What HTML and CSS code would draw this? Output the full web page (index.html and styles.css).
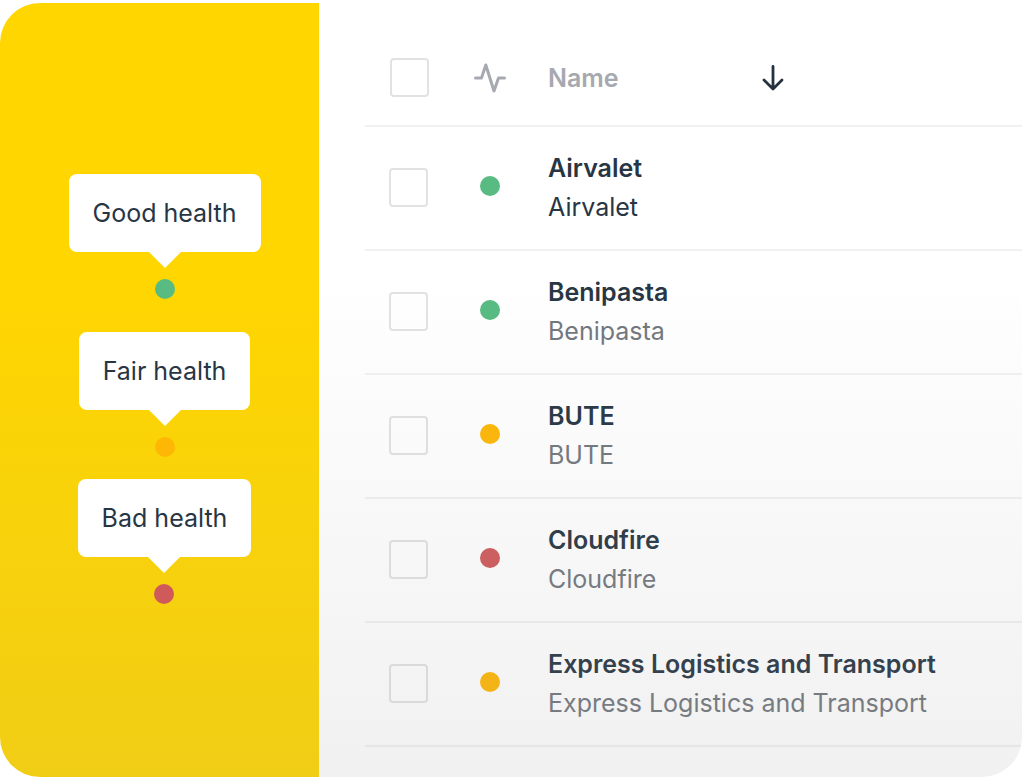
FILE: index.html
```html
<!DOCTYPE html>
<html lang="en">
<head>
    <meta charset="UTF-8">
    <meta name="viewport" content="width=device-width, initial-scale=1.0">
    <title>Customer health</title>
    <link rel="stylesheet" href="styles.css">
</head>
<body>
    <div class="card">
        <aside class="sidebar">
            <div class="legend">
                <div class="bubble">Good health</div>
                <span class="dot good"></span>
            </div>
            <div class="legend legend-fair">
                <div class="bubble">Fair health</div>
                <span class="dot fair"></span>
            </div>
            <div class="legend legend-bad">
                <div class="bubble">Bad health</div>
                <span class="dot bad"></span>
            </div>
        </aside>

        <main class="content">
            <table class="accounts">
                <thead>
                    <tr>
                        <th class="check-col"><input type="checkbox" class="check" aria-label="Select all"></th>
                        <th class="health-col">
                            <svg class="pulse" width="34" height="32" viewBox="0 0 34 32" role="img" aria-label="Health">
                                <path d="M2.5 16H8.5L12.800 3L21 29L25.500 16H31.500" fill="none" stroke="#a6a9af" stroke-width="3" stroke-linecap="round" stroke-linejoin="round"/>
                            </svg>
                        </th>
                        <th class="name-col">
                            <button type="button" class="sort">
                                Name
                                <svg width="24" height="28" viewBox="0 0 24 28" aria-hidden="true">
                                    <path d="M12 2.500V25M3 16L12 25L21 16" fill="none" stroke="#25313f" stroke-width="2.800" stroke-linecap="round" stroke-linejoin="round"/>
                                </svg>
                            </button>
                        </th>
                    </tr>
                </thead>
                <tbody>
                    <tr class="active">
                        <td class="check-col"><input type="checkbox" class="check" aria-label="Select Airvalet"></td>
                        <td class="health-col"><span class="dot good"></span></td>
                        <td class="name-col"><strong>Airvalet</strong><span class="sub">Airvalet</span></td>
                    </tr>
                    <tr>
                        <td class="check-col"><input type="checkbox" class="check" aria-label="Select Benipasta"></td>
                        <td class="health-col"><span class="dot good"></span></td>
                        <td class="name-col"><strong>Benipasta</strong><span class="sub">Benipasta</span></td>
                    </tr>
                    <tr>
                        <td class="check-col"><input type="checkbox" class="check" aria-label="Select BUTE"></td>
                        <td class="health-col"><span class="dot fair"></span></td>
                        <td class="name-col"><strong>BUTE</strong><span class="sub">BUTE</span></td>
                    </tr>
                    <tr>
                        <td class="check-col"><input type="checkbox" class="check" aria-label="Select Cloudfire"></td>
                        <td class="health-col"><span class="dot bad"></span></td>
                        <td class="name-col"><strong>Cloudfire</strong><span class="sub">Cloudfire</span></td>
                    </tr>
                    <tr>
                        <td class="check-col"><input type="checkbox" class="check" aria-label="Select Express Logistics and Transport"></td>
                        <td class="health-col"><span class="dot fair"></span></td>
                        <td class="name-col"><strong>Express Logistics and Transport</strong><span class="sub">Express Logistics and Transport</span></td>
                    </tr>
                </tbody>
            </table>
        </main>
    </div>
</body>
</html>
```

FILE: styles.css
```css
* {
    box-sizing: border-box;
}

body {
    margin: 0;
    background-color: #fff;
    color: #283644;
    font-family: Inter, "Liberation Sans", sans-serif;
    font-size: 25px;
    line-height: 39px;
}

.card {
    position: relative;
    display: flex;
    margin: 3px 2px 5px 0;
    border-radius: 40px;
    overflow: hidden;
}

/* grey shade over the lower part of the card */
.card::after {
    content: "";
    position: absolute;
    inset: 0;
    background: linear-gradient(180deg, rgba(154, 154, 154, 0) 35%, rgba(154, 154, 154, 0.14) 100%);
    pointer-events: none;
}

/* Legend */
.sidebar {
    flex: 0 0 319px;
    display: flex;
    flex-direction: column;
    align-items: center;
    padding: 171px 0 0 10px;
    background-color: #ffd600;
}

.legend {
    position: relative;
    z-index: 1;
    display: flex;
    flex-direction: column;
    align-items: center;
    gap: 27px;
}

.legend-fair {
    margin-top: 33px;
}

.legend-bad {
    margin-top: 22px;
}

.bubble {
    position: relative;
    padding: 20px 24px 19px;
    border-radius: 8px;
    background-color: #fff;
}

.bubble::after {
    content: "";
    position: absolute;
    top: 100%;
    left: 50%;
    margin-left: -16px;
    border: 16px solid transparent;
    border-top-color: #fff;
    border-bottom: 0;
}

.dot {
    display: block;
    width: 20px;
    height: 20px;
    border-radius: 50%;
}

.good {
    background-color: #57bb82;
}

.fair {
    background-color: #ffb706;
}

.bad {
    background-color: #d05a5a;
}

/* Table */
.content {
    flex: 1;
    padding: 0 0 30px 46px;
}

.accounts {
    width: 100%;
    border-collapse: separate;
    border-spacing: 0;
}

th, td {
    height: 124px;
    padding: 0;
    border-bottom: 2px solid #f1f1f2;
    text-align: left;
    vertical-align: middle;
}

th {
    padding-top: 28px;
    color: #a6a9af;
    font-weight: 600;
}

.check-col {
    width: 90px;
    padding-left: 24px;
    padding-bottom: 2px;
}

th.check-col {
    padding-left: 25px;
}

.health-col {
    width: 70px;
}

td.health-col {
    padding-bottom: 4px;
}

.health-col .dot, .pulse {
    display: block;
    margin: 0 auto;
}

.name-col {
    padding-left: 23px;
}

.check {
    appearance: none;
    display: block;
    width: 39px;
    height: 39px;
    margin: 0;
    border: 2px solid #e2e2e3;
    border-radius: 4px;
    background-color: transparent;
    cursor: pointer;
}

.check:checked {
    background-color: #57bb82;
}

.sort {
    display: flex;
    align-items: center;
    justify-content: space-between;
    width: 237px;
    padding: 0;
    border: none;
    background: none;
    color: inherit;
    font: inherit;
    cursor: pointer;
}

strong, .sub {
    display: block;
}

strong {
    font-weight: 600;
}

.sub {
    color: #72777e;
}

.active .sub {
    color: #283644;
}
```
